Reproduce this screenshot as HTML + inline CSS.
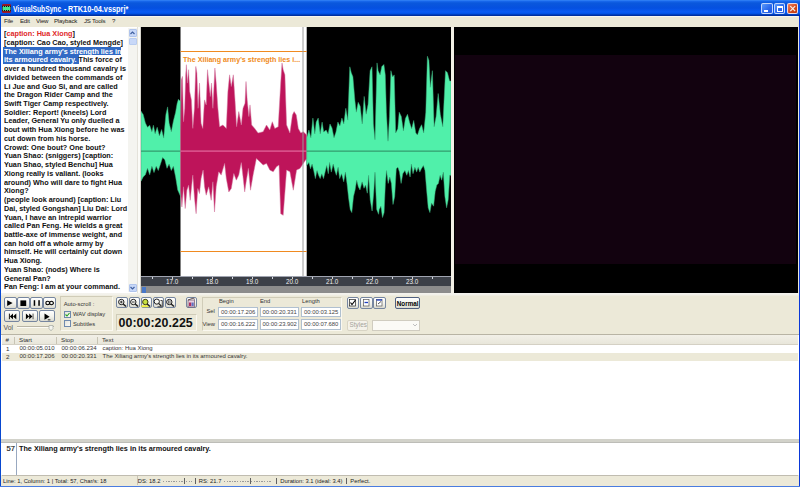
<!DOCTYPE html>
<html><head><meta charset="utf-8">
<style>
*{margin:0;padding:0;box-sizing:border-box}
html,body{width:800px;height:487px;overflow:hidden;background:#ECE9D8;font-family:"Liberation Sans",sans-serif;position:relative}
.a{position:absolute}
.t{position:absolute;white-space:nowrap}
#title{left:0;top:0;width:800px;height:16px;background:linear-gradient(#3C8CF8 0px,#1A6AEE 1px,#0A58DC 3px,#0550E0 8px,#0A5CF4 12px,#0050E0 14px,#0030A0 15px,#0030A0 16px)}
#menu{left:2px;top:16px;width:796px;height:11px;background:#ECE9D8;border-top:1px solid #F8F6EE}
.mi{position:absolute;top:17.2px;font-size:6.1px;color:#222;letter-spacing:-0.2px}
#txt{left:1.4px;top:27px;width:137.6px;height:266px;background:#fff;overflow:hidden}
.ln{position:absolute;left:1.5px;font-size:7.6px;font-weight:bold;color:#101010;white-space:nowrap;line-height:8.73px;height:8.73px;transform:scaleX(0.955);transform-origin:0 0}
#wave{left:141px;top:27px;width:310px;height:249px;background:#000;overflow:hidden}
#video{left:454px;top:27px;width:344px;height:266px;background:#000}
.btn{position:absolute;border:1px solid #7686A0;border-radius:2px;background:linear-gradient(#FFFFFF,#F2F2EC 55%,#DADAD0)}
.edit{position:absolute;background:#fff;border:1px solid #B0C0D0;font-size:5.9px;color:#444;line-height:8.5px;padding-left:2px}
.lbl{position:absolute;font-size:5.8px;color:#333;white-space:nowrap}
.st{position:absolute;top:477.6px;font-size:5.8px;color:#222;white-space:nowrap}
</style></head><body>

<!-- window borders -->
<div class="a" style="left:0;top:0;width:1.4px;height:487px;background:#0848D0"></div>
<div class="a" style="left:798.6px;top:0;width:1.4px;height:487px;background:#0A38D8"></div>
<div class="a" style="left:0;top:485.8px;width:800px;height:1.2px;background:#4A7CE0"></div>

<!-- title bar -->
<div id="title" class="a"></div>
<svg class="a" style="left:2px;top:3.7px" width="9" height="9" viewBox="0 0 9 9">
<rect x="0" y="0" width="9" height="9" rx="1.2" fill="#A01828"/>
<rect x="0.3" y="1.8" width="8.4" height="5.4" fill="#101010"/>
<rect x="0.6" y="3" width="7.8" height="3" fill="#40E890"/>
<g fill="#60F0A0"><rect x="1" y="2.2" width="1" height="0.8"/><rect x="3" y="2.2" width="1" height="0.8"/><rect x="5" y="2.2" width="1" height="0.8"/><rect x="7" y="2.2" width="1" height="0.8"/>
<rect x="1" y="6" width="1" height="0.8"/><rect x="3" y="6" width="1" height="0.8"/><rect x="5" y="6" width="1" height="0.8"/><rect x="7" y="6" width="1" height="0.8"/></g>
</svg>
<div class="t" style="left:13.1px;top:4.9px;font-size:8.2px;font-weight:bold;color:#fff;transform:scaleX(0.816);transform-origin:0 0">VisualSubSync</div>
<div class="t" style="left:63.8px;top:4.9px;font-size:8.2px;font-weight:bold;color:#fff;transform:scaleX(0.85);transform-origin:0 0">-</div>
<div class="t" style="left:68.3px;top:4.9px;font-size:8.2px;font-weight:bold;color:#fff;transform:scaleX(0.895);transform-origin:0 0">RTK10-04.vssprj*</div>
<div class="a" style="left:761.4px;top:3px;width:11.2px;height:11.3px;border:1px solid rgba(230,240,255,0.8);border-radius:2px;background:linear-gradient(135deg,#5A9AFA,#2866EC 60%,#1E58E0)"></div>
<div class="a" style="left:764px;top:10px;width:4px;height:2px;background:#fff"></div>
<div class="a" style="left:774px;top:3px;width:11.2px;height:11.3px;border:1px solid rgba(230,240,255,0.8);border-radius:2px;background:linear-gradient(135deg,#5A9AFA,#2866EC 60%,#1E58E0)"></div>
<div class="a" style="left:777px;top:6px;width:6px;height:6px;border:1px solid #fff;border-top-width:2px"></div>
<div class="a" style="left:786.5px;top:3px;width:11.5px;height:11.3px;border:1px solid rgba(240,240,255,0.85);border-radius:2px;background:linear-gradient(135deg,#F08060,#D24818 60%,#C03810)"></div>
<svg class="a" style="left:786.5px;top:3px" width="11.5" height="11.3"><path d="M3.3 3.2L8.2 8.1M8.2 3.2L3.3 8.1" stroke="#F8F0E8" stroke-width="1.2"/></svg>

<!-- menu -->
<div id="menu" class="a"></div>
<div class="mi" style="left:4px">File</div>
<div class="mi" style="left:20px">Edit</div>
<div class="mi" style="left:36px">View</div>
<div class="mi" style="left:54px">Playback</div>
<div class="mi" style="left:84px">JS Tools</div>
<div class="mi" style="left:112px">?</div>

<!-- text panel -->
<div id="txt" class="a"></div>
<div id="lines" class="a" style="left:2px;top:30.2px;width:126px;height:263px;overflow:hidden">
<div class="a" style="left:1.1px;top:16.9px;width:118px;height:8.35px;background:#316AC5"></div>
<div class="a" style="left:1.1px;top:25.25px;width:75.5px;height:8.35px;background:#316AC5"></div>
<div class="ln" style="top:0"><span>[</span><span style="color:#E02828">caption: Hua Xiong</span><span>]</span></div>
<div class="ln" style="top:8.73px">[caption: Cao Cao, styled Mengde]</div>
<div class="ln" style="top:17.46px;color:#fff">The Xiliang army's strength lies in</div>
<div class="ln" style="top:26.19px"><span style="color:#fff">its armoured cavalry.</span> This force of</div>
<div class="ln" style="top:34.92px">over a hundred thousand cavalry is</div>
<div class="ln" style="top:43.65px">divided between the commands of</div>
<div class="ln" style="top:52.38px">Li Jue and Guo Si, and are called</div>
<div class="ln" style="top:61.11px">the Dragon Rider Camp and the</div>
<div class="ln" style="top:69.84px">Swift Tiger Camp respectively.</div>
<div class="ln" style="top:78.57px">Soldier: Report! (kneels) Lord</div>
<div class="ln" style="top:87.3px">Leader, General Yu only duelled a</div>
<div class="ln" style="top:96.03px">bout with Hua Xiong before he was</div>
<div class="ln" style="top:104.76px">cut down from his horse.</div>
<div class="ln" style="top:113.49px">Crowd: One bout? One bout?</div>
<div class="ln" style="top:122.22px">Yuan Shao: (sniggers) [caption:</div>
<div class="ln" style="top:130.95px">Yuan Shao, styled Benchu] Hua</div>
<div class="ln" style="top:139.68px">Xiong really is valiant. (looks</div>
<div class="ln" style="top:148.41px">around) Who will dare to fight Hua</div>
<div class="ln" style="top:157.14px">Xiong?</div>
<div class="ln" style="top:165.87px">(people look around) [caption: Liu</div>
<div class="ln" style="top:174.6px">Dai, styled Gongshan] Liu Dai: Lord</div>
<div class="ln" style="top:183.33px">Yuan, I have an intrepid warrior</div>
<div class="ln" style="top:192.06px">called Pan Feng. He wields a great</div>
<div class="ln" style="top:200.79px">battle-axe of immense weight, and</div>
<div class="ln" style="top:209.52px">can hold off a whole army by</div>
<div class="ln" style="top:218.25px">himself. He will certainly cut down</div>
<div class="ln" style="top:226.98px">Hua Xiong.</div>
<div class="ln" style="top:235.71px">Yuan Shao: (nods) Where is</div>
<div class="ln" style="top:244.44px">General Pan?</div>
<div class="ln" style="top:253.17px">Pan Feng: I am at your command.</div>
</div>
<!-- text scrollbar -->
<div class="a" style="left:128px;top:28px;width:9px;height:264px;background:#F4F4F0"></div>
<div class="a" style="left:128.5px;top:29px;width:8px;height:8px;background:#C8D8F8;border:1px solid #B0C4EC;border-radius:1px"></div>
<svg class="a" style="left:129px;top:30px" width="7" height="6"><path d="M1.5 4L3.5 2L5.5 4" stroke="#4060A0" stroke-width="1.2" fill="none"/></svg>
<div class="a" style="left:128.5px;top:38px;width:8px;height:7px;background:#C8D8F8;border:1px solid #B8CCF0;border-radius:1px"></div>
<div class="a" style="left:128.5px;top:284px;width:8px;height:8px;background:#C8D8F8;border:1px solid #B0C4EC;border-radius:1px"></div>
<svg class="a" style="left:129px;top:285px" width="7" height="6"><path d="M1.5 2L3.5 4L5.5 2" stroke="#4060A0" stroke-width="1.2" fill="none"/></svg>

<!-- separator -->
<div class="a" style="left:136.8px;top:27px;width:4.2px;height:266px;background:#FBFBF8;border-left:0.6px solid #E4E2DA;border-right:0.6px solid #D8D6CE"></div>

<!-- waveform -->
<div id="wave" class="a"></div>
<svg class="a" style="left:141px;top:27px" width="310" height="249" viewBox="141 27 310 249">
<rect x="180.5" y="27" width="126.2" height="249" fill="#fff"/>
<path fill="#50F0AA" stroke="#3CA878" stroke-width="0.5" d="M141 151 L141.0 111.2 143.2 114.4 145.4 123.0 147.5 127.3 149.7 125.2 151.9 131.7 153.4 125.2 155.1 133.8 157.2 127.3 159.4 136.0 161.6 129.5 163.7 138.1 165.9 114.4 167.6 106.9 169.1 123.0 171.3 131.7 173.4 120.9 175.6 112.2 177.1 103.6 178.4 99.3 180.5 101.5 180.5 151 Z"/>
<path fill="#50F0AA" stroke="#3CA878" stroke-width="0.5" d="M141 151 L141.0 181.2 143.2 176.9 145.4 174.8 147.5 168.3 149.7 174.8 151.9 166.2 154.0 172.6 156.2 166.2 158.3 170.5 160.5 164.0 162.6 157.5 164.8 159.7 167.0 168.3 169.1 164.0 171.3 170.5 173.4 166.2 175.6 176.9 177.7 189.9 180.5 196.3 180.5 151 Z"/>
<path fill="#BE145A" stroke="#D27AA0" stroke-width="0.5" d="M180.5 151 L180.5 133.0 181.4 79.8 182.4 76.4 183.5 121.7 184.7 108.3 185.7 74.8 186.4 64.7 187.4 83.1 188.6 69.7 189.7 91.5 191.4 99.9 192.8 128.4 194.4 108.3 195.8 66.4 196.9 73.1 198.1 108.3 199.5 83.1 201.1 123.3 202.8 128.4 204.5 99.9 206.2 104.9 207.5 69.7 208.7 81.5 210.3 96.5 211.5 83.1 212.9 108.3 214.9 68.0 216.2 83.1 217.9 108.3 219.6 126.7 222.9 125.0 226.3 128.4 227.9 91.5 229.6 74.8 231.3 86.5 233.3 74.8 235.0 99.9 236.6 126.7 238.8 111.6 241.3 125.0 243.0 108.3 245.0 103.2 246.0 81.5 247.2 99.9 248.9 116.6 250.0 104.9 251.7 125.0 254.7 128.4 258.1 133.0 263.1 131.7 266.5 125.0 269.8 130.0 272.3 121.7 274.8 128.4 278.2 126.7 280.7 83.1 282.0 63.0 283.2 69.7 284.9 74.8 286.6 125.0 289.9 133.0 292.4 115.0 294.1 111.6 296.3 115.0 298.3 128.4 300.8 133.0 303.3 131.7 306.7 135.0 306.7 151 Z"/>
<path fill="#BE145A" stroke="#D27AA0" stroke-width="0.5" d="M180.5 151 L180.5 190.2 181.9 207.0 183.5 186.8 185.2 208.6 186.9 190.2 188.6 185.2 190.2 200.3 192.8 175.1 194.4 196.9 196.1 213.7 197.8 188.5 199.5 193.6 201.1 178.5 203.1 170.1 204.5 186.8 206.2 195.2 208.7 186.8 211.2 200.3 212.9 181.8 214.5 212.0 216.2 186.8 218.7 171.8 221.2 175.1 224.6 163.4 226.3 178.5 228.8 191.9 231.3 188.5 233.8 173.5 236.3 180.2 238.8 175.1 241.3 162.6 243.0 176.8 244.7 191.9 246.4 180.2 248.4 168.4 250.5 190.2 253.1 175.1 256.4 158.4 259.8 161.7 263.1 165.1 266.5 163.4 269.8 170.1 273.2 171.8 276.5 166.8 279.0 165.1 280.7 213.7 283.2 215.3 286.6 170.1 289.9 171.8 293.3 190.2 296.6 170.1 300.0 168.4 303.3 163.4 306.7 158.4 306.7 151 Z"/>
<path fill="#50F0AA" stroke="#3CA878" stroke-width="0.5" d="M306.7 151 L306.7 137.8 308.9 130.0 310.9 137.8 312.9 118.1 314.8 133.9 316.2 122.1 318.2 118.1 320.2 133.9 322.1 122.1 323.7 131.9 326.1 130.0 328.1 133.9 330.0 124.0 332.0 128.0 334.0 137.8 336.0 131.9 337.9 122.1 339.9 126.0 341.9 118.1 343.8 124.0 345.8 108.3 347.8 120.1 349.8 66.8 351.3 72.8 352.9 76.7 354.9 100.4 356.3 112.2 358.2 102.3 360.2 106.3 362.2 124.0 364.2 96.4 366.1 114.2 368.1 104.3 370.1 70.8 372.0 66.8 373.4 124.0 375.0 139.8 377.0 62.9 378.1 70.7 380.1 74.9 381.8 66.6 383.9 64.5 385.3 74.9 386.4 112.2 388.0 141.2 389.5 116.4 390.9 70.7 392.6 77.0 394.2 74.9 395.7 133.0 397.8 128.8 399.2 112.2 401.3 116.4 403.4 130.9 405.4 118.4 407.5 114.3 409.6 122.6 411.7 128.8 413.7 120.5 415.8 133.0 417.5 135.0 419.5 128.8 421.6 124.7 423.7 133.0 425.8 112.2 427.4 56.2 428.9 60.4 430.3 87.3 432.4 70.7 434.1 126.7 436.1 116.4 438.2 93.5 440.3 114.3 442.8 126.7 445.5 70.7 447.5 72.8 449.6 81.1 451.0 81.1 451 151 Z"/>
<path fill="#50F0AA" stroke="#3CA878" stroke-width="0.5" d="M306.7 151 L306.7 165.6 308.9 162.4 310.5 168.8 312.1 164.0 313.7 170.5 315.4 178.6 317.0 170.5 318.6 175.3 320.2 178.6 321.8 173.7 323.5 178.6 325.1 172.1 326.7 165.6 328.3 173.7 329.6 162.4 331.3 172.1 333.2 164.0 334.8 170.5 336.4 175.3 338.1 167.2 339.7 178.6 341.6 173.7 343.7 181.8 345.4 172.1 347.0 183.4 348.6 198.0 350.2 209.4 351.8 212.6 353.5 196.4 355.1 189.9 356.7 180.2 358.3 186.7 360.0 189.9 362.1 181.8 364.0 188.3 365.6 185.1 367.3 193.2 368.6 175.3 370.2 199.7 372.1 211.0 373.7 193.2 375.0 172.1 376.7 209.4 378.6 214.3 379.2 209.4 380.9 206.2 382.5 217.5 384.1 212.6 385.4 183.4 386.5 170.5 388.2 183.4 389.8 177.0 391.4 183.4 393.0 204.5 394.7 196.4 396.3 168.8 397.9 167.2 399.5 172.1 401.1 183.4 402.8 173.7 404.9 170.5 406.8 175.3 408.4 170.5 410.1 177.0 411.4 164.0 413.0 173.7 414.9 167.2 416.6 172.1 418.2 167.2 419.8 172.1 421.4 168.8 423.4 165.6 425.0 170.5 426.6 189.9 428.2 207.8 429.9 212.6 431.5 202.9 433.6 206.2 435.2 191.6 436.8 185.1 438.4 183.4 440.1 175.3 441.7 180.2 443.3 172.1 444.9 196.4 446.6 207.8 448.2 199.7 449.8 175.3 451.0 175.3 451 151 Z"/>
<line x1="141" y1="151.3" x2="180.5" y2="151.3" stroke="#309868" stroke-width="0.8"/>
<line x1="180.5" y1="151.3" x2="306.7" y2="151.3" stroke="#E8609A" stroke-width="0.8"/>
<line x1="306.7" y1="151.3" x2="451" y2="151.3" stroke="#309868" stroke-width="0.8"/>
<line x1="180.5" y1="51.5" x2="306.7" y2="51.5" stroke="#F08A20" stroke-width="1"/>
<line x1="180.5" y1="251.5" x2="306.7" y2="251.5" stroke="#F08A20" stroke-width="1"/>
<line x1="303" y1="27" x2="303" y2="276" stroke="#9A9A9A" stroke-width="1"/>
</svg>
<div class="t" style="left:183px;top:55.5px;font-size:7.15px;font-weight:bold;color:#F08A20">The Xiliang army's strength lies i...</div>
<!-- ruler -->
<div class="a" style="left:141px;top:275.6px;width:310px;height:10px;background:#3C4048;border-top:1px solid #A0A4B0"></div>
<div class="a" style="left:152px;top:276.5px;width:1px;height:2px;background:#D0D4DC"></div><div class="a" style="left:172px;top:276.5px;width:1px;height:2px;background:#D0D4DC"></div><div class="a" style="left:192px;top:276.5px;width:1px;height:2px;background:#D0D4DC"></div><div class="a" style="left:212px;top:276.5px;width:1px;height:2px;background:#D0D4DC"></div><div class="a" style="left:232px;top:276.5px;width:1px;height:2px;background:#D0D4DC"></div><div class="a" style="left:252px;top:276.5px;width:1px;height:2px;background:#D0D4DC"></div><div class="a" style="left:272px;top:276.5px;width:1px;height:2px;background:#D0D4DC"></div><div class="a" style="left:292px;top:276.5px;width:1px;height:2px;background:#D0D4DC"></div><div class="a" style="left:312px;top:276.5px;width:1px;height:2px;background:#D0D4DC"></div><div class="a" style="left:332px;top:276.5px;width:1px;height:2px;background:#D0D4DC"></div><div class="a" style="left:352px;top:276.5px;width:1px;height:2px;background:#D0D4DC"></div><div class="a" style="left:372px;top:276.5px;width:1px;height:2px;background:#D0D4DC"></div><div class="a" style="left:392px;top:276.5px;width:1px;height:2px;background:#D0D4DC"></div><div class="a" style="left:412px;top:276.5px;width:1px;height:2px;background:#D0D4DC"></div><div class="a" style="left:432px;top:276.5px;width:1px;height:2px;background:#D0D4DC"></div>
<div class="t" style="left:166px;top:278.2px;font-size:6.3px;color:#F0F0F0;width:12px;text-align:center">17.0</div><div class="t" style="left:206px;top:278.2px;font-size:6.3px;color:#F0F0F0;width:12px;text-align:center">18.0</div><div class="t" style="left:246px;top:278.2px;font-size:6.3px;color:#F0F0F0;width:12px;text-align:center">19.0</div><div class="t" style="left:286px;top:278.2px;font-size:6.3px;color:#F0F0F0;width:12px;text-align:center">20.0</div><div class="t" style="left:326px;top:278.2px;font-size:6.3px;color:#F0F0F0;width:12px;text-align:center">21.0</div><div class="t" style="left:366px;top:278.2px;font-size:6.3px;color:#F0F0F0;width:12px;text-align:center">22.0</div><div class="t" style="left:406px;top:278.2px;font-size:6.3px;color:#F0F0F0;width:12px;text-align:center">23.0</div>
<div class="a" style="left:141px;top:285.6px;width:310px;height:7px;background:#8C8C8C"></div>
<div class="a" style="left:142px;top:287px;width:3.6px;height:5.5px;background:#4878C8"></div>

<!-- splitter -->
<div class="a" style="left:451px;top:27px;width:3px;height:266px;background:#F2F0E6"></div>

<!-- video -->
<div id="video" class="a"></div>
<div class="a" style="left:455px;top:54.5px;width:341px;height:209.8px;background:#12020F"></div>


<!-- control panel -->
<div class="a" style="left:1.4px;top:293px;width:797.2px;height:41px;background:linear-gradient(#F4F3EE 0,#F2F1EA 2px,#ECE9D8 3px)"></div>
<!-- transport buttons -->
<div class="btn" style="left:4px;top:297px;width:12.5px;height:11.5px"></div>
<div class="btn" style="left:17px;top:297px;width:12.5px;height:11.5px"></div>
<div class="btn" style="left:30px;top:297px;width:12.5px;height:11.5px"></div>
<div class="btn" style="left:43px;top:297px;width:12.5px;height:11.5px"></div>
<div class="btn" style="left:4px;top:310px;width:16px;height:12px"></div>
<div class="btn" style="left:21.5px;top:310px;width:16.5px;height:12px"></div>
<div class="btn" style="left:38.8px;top:310px;width:16.7px;height:12px"></div>
<svg class="a" style="left:0;top:290px" width="60" height="45">
<path d="M7.2 10.2L7.2 16L12.6 13.1Z" fill="#000"/>
<rect x="20.4" y="10.4" width="5.8" height="5.6" fill="#000"/>
<rect x="33.7" y="10.2" width="1.5" height="5.6" fill="#000"/><rect x="38.3" y="10.2" width="1.5" height="5.6" fill="#000"/>
<path d="M45.8 13a1.9 1.7 0 1 0 3.8 0a1.9 1.7 0 1 0 3.8 0a1.9 1.7 0 1 0 -3.8 0a1.9 1.7 0 1 0 -3.8 0Z" fill="none" stroke="#000" stroke-width="1.1"/>
<rect x="8.9" y="23.6" width="0.9" height="5.6" fill="#000"/>
<path d="M13 23.6L13 29.2L9.8 26.4Z M16.3 23.6L16.3 29.2L13 26.4Z" fill="#000"/>
<path d="M25.9 23.6L25.9 29.2L29.2 26.4Z M29.2 23.6L29.2 29.2L32.5 26.4Z" fill="#000"/>
<rect x="32.6" y="23.6" width="0.9" height="5.6" fill="#444"/>
<path d="M44.5 23.6L44.5 29.8L49.6 26.7Z" fill="#000"/><rect x="47.8" y="29.2" width="2.6" height="1.2" fill="#444"/>
</svg>
<div class="lbl" style="left:3.5px;top:324px;font-size:6.8px;color:#555">Vol</div>
<div class="a" style="left:16.6px;top:326px;width:37px;height:2.2px;border-top:1px solid #B8B4A4;background:#FBFAF4"></div>
<svg class="a" style="left:48px;top:324.5px" width="6" height="7"><path d="M1 0.5H5V3.5L3 5.8L1 3.5Z" fill="#F4F4EE" stroke="#A0A8A0" stroke-width="0.7"/></svg>

<!-- autoscroll panel -->
<div class="a" style="left:59.5px;top:296.2px;width:53px;height:34.5px;border-top:1px solid #D0CCB8;border-left:1px solid #D0CCB8;border-right:1px solid #FAF8F0;border-bottom:1px solid #FAF8F0"></div>
<div class="lbl" style="left:63.7px;top:300.8px;font-size:5.8px">Auto-scroll :</div>
<div class="a" style="left:64px;top:311px;width:7px;height:7px;border:1px solid #6F8AAE;background:linear-gradient(135deg,#E4E4DC,#FAFAF6)"></div>
<svg class="a" style="left:64px;top:311px" width="7" height="7"><path d="M1.5 3.5L3 5L5.5 2" stroke="#21A121" stroke-width="1.1" fill="none"/></svg>
<div class="lbl" style="left:73px;top:311.4px;font-size:5.8px">WAV display</div>
<div class="a" style="left:64px;top:320.3px;width:7px;height:7px;border:1px solid #6F8AAE;background:linear-gradient(135deg,#E4E4DC,#FAFAF6)"></div>
<div class="lbl" style="left:73px;top:320.8px;font-size:5.8px">Subtitles</div>

<!-- zoom buttons -->
<div class="btn" style="left:116.3px;top:296.8px;width:11.5px;height:11.5px"></div>
<div class="btn" style="left:128.8px;top:296.8px;width:11.5px;height:11.5px"></div>
<div class="btn" style="left:140.8px;top:296.8px;width:11.5px;height:11.5px"></div>
<div class="btn" style="left:152.8px;top:296.8px;width:11.5px;height:11.5px"></div>
<div class="btn" style="left:164.8px;top:296.8px;width:11.5px;height:11.5px"></div>
<div class="btn" style="left:185.5px;top:296.8px;width:11.5px;height:11.5px"></div>
<svg class="a" style="left:110px;top:290px" width="90" height="22">
<g fill="none" stroke="#202020" stroke-width="1">
<circle cx="11.3" cy="12" r="2.7"/><path d="M13.2 13.9L16 16.6" stroke-width="1.4"/><path d="M10 12H12.6M11.3 10.7V13.3" stroke-width="0.9"/>
<circle cx="23.3" cy="12" r="2.7"/><path d="M25.2 13.9L28 16.6" stroke-width="1.4"/><path d="M22 12H24.6" stroke-width="0.9"/>
<rect x="31.5" y="15.2" width="7" height="2" fill="#F0F040" stroke="none"/>
<circle cx="35.3" cy="12" r="2.7" fill="#C8E040" stroke="#404010"/><path d="M37.2 13.9L40 16.6" stroke-width="1.4"/>
<circle cx="46.8" cy="11.6" r="2.6"/><path d="M48.6 13.4L51.2 16" stroke-width="1.2"/><path d="M50.5 10.5H52.3V16.8H47.5" stroke-width="0.8"/>
<circle cx="59.3" cy="12" r="2.7"/><path d="M61.2 13.9L64 16.6" stroke-width="1.4"/><path d="M58.6 10.3V13.7M60 10.3V13.7" stroke-width="0.7"/>
</g>
<rect x="78" y="10" width="6.5" height="7" fill="#E8D0E0" stroke="#705868" stroke-width="0.7"/>
<path d="M78 10L83.5 8L84.5 9.5" fill="none" stroke="#504040" stroke-width="0.9"/>
<rect x="79" y="12.5" width="2.2" height="3.5" fill="#B03060"/><rect x="81.5" y="12.5" width="2.2" height="3.5" fill="#6070C0"/>
</svg>
<!-- time display -->
<div class="a" style="left:115.6px;top:314px;width:81.5px;height:17px;border-top:1px solid #D0CCB8;border-left:1px solid #D0CCB8;border-right:1px solid #FAF8F0;border-bottom:1px solid #FAF8F0"></div>
<div class="t" style="left:118.5px;top:315.5px;font-size:12.4px;font-weight:bold;color:#111;letter-spacing:0.05px">00:00:20.225</div>

<!-- sel/view panel -->
<div class="a" style="left:201.5px;top:296.6px;width:140.5px;height:34.4px;border-top:1px solid #D0CCB8;border-left:1px solid #D0CCB8;border-right:1px solid #FAF8F0;border-bottom:1px solid #FAF8F0"></div>
<div class="lbl" style="left:219px;top:298px">Begin</div>
<div class="lbl" style="left:260px;top:298px">End</div>
<div class="lbl" style="left:302px;top:298px">Length</div>
<div class="lbl" style="left:206.5px;top:308px">Sel</div>
<div class="lbl" style="left:202.5px;top:320.5px">View</div>
<div class="edit" style="left:218px;top:306.5px;width:39.5px;height:10px">00:00:17.206</div>
<div class="edit" style="left:259.5px;top:306.5px;width:39.5px;height:10px">00:00:20.331</div>
<div class="edit" style="left:301px;top:306.5px;width:40px;height:10px">00:00:03.125</div>
<div class="edit" style="left:218px;top:318.8px;width:39.5px;height:10.8px">00:00:16.222</div>
<div class="edit" style="left:259.5px;top:318.8px;width:39.5px;height:10.8px">00:00:23.902</div>
<div class="edit" style="left:301px;top:318.8px;width:40px;height:10.8px">00:00:07.680</div>

<!-- style buttons -->
<div class="btn" style="left:346.5px;top:297px;width:12.5px;height:11.6px"></div>
<div class="btn" style="left:360px;top:297px;width:12.5px;height:11.6px"></div>
<div class="btn" style="left:373px;top:297px;width:12.5px;height:11.6px"></div>
<svg class="a" style="left:340px;top:290px" width="50" height="22">
<rect x="9.5" y="9.5" width="6" height="6.5" fill="#fff" stroke="#222" stroke-width="0.7"/><path d="M10.5 12.5L12 14.5L15.5 10" stroke="#000" stroke-width="1.1" fill="none"/>
<rect x="23.5" y="9.5" width="5.5" height="6.5" fill="#fff" stroke="#555" stroke-width="0.7"/><path d="M24.5 12.5H28" stroke="#2040C0" stroke-width="1.3"/>
<rect x="36.5" y="9.5" width="5.5" height="6.5" fill="#fff" stroke="#555" stroke-width="0.7"/><path d="M36.5 10H42" stroke="#2040C0" stroke-width="1.3"/><path d="M38 14L41 11.5" stroke="#222" stroke-width="0.8"/>
</svg>
<div class="btn" style="left:394.5px;top:297px;width:25.5px;height:12px;border-color:#506080"></div>
<div class="t" style="left:396.8px;top:299.8px;font-size:6.3px;font-weight:bold;color:#000">Normal</div>
<div class="a" style="left:347px;top:320px;width:21px;height:10.5px;border:1px solid #D8D4C4;border-radius:2px;background:#F4F2EA"></div>
<div class="t" style="left:349.5px;top:321.3px;font-size:6.4px;color:#A4A29A">Styles</div>
<div class="a" style="left:372px;top:319.5px;width:48px;height:11px;border:1px solid #D0CCC0;background:#FBFAF6"></div>
<svg class="a" style="left:411px;top:321px" width="8" height="8"><path d="M2 3L4 5L6 3" stroke="#C0C0C0" stroke-width="1" fill="none"/></svg>

<!-- list -->
<div class="a" style="left:1.4px;top:334px;width:797.2px;height:105px;background:#fff;border-top:1px solid #B8B4A4"></div>
<div class="a" style="left:2px;top:335px;width:796px;height:10px;background:linear-gradient(#F2F0E8,#E8E6DA);border-bottom:1px solid #D4D0C4"></div>
<div class="a" style="left:14px;top:336.5px;width:1px;height:7px;background:#C8C4B4"></div>
<div class="a" style="left:56px;top:336.5px;width:1px;height:7px;background:#C8C4B4"></div>
<div class="a" style="left:97px;top:336.5px;width:1px;height:7px;background:#C8C4B4"></div>
<div class="lbl" style="left:5.5px;top:336.3px;font-size:6.2px">#</div>
<div class="lbl" style="left:19px;top:336.3px;font-size:6.2px">Start</div>
<div class="lbl" style="left:61px;top:336.3px;font-size:6.2px">Stop</div>
<div class="lbl" style="left:102px;top:336.3px;font-size:6.2px">Text</div>
<div class="a" style="left:2px;top:353px;width:796px;height:8px;background:#ECE9D8"></div>
<div class="lbl" style="left:6px;top:344.8px;font-size:6.2px">1</div>
<div class="lbl" style="left:19.5px;top:344.8px;font-size:6px">00:00:05.010</div>
<div class="lbl" style="left:61.5px;top:344.8px;font-size:6px">00:00:06.234</div>
<div class="lbl" style="left:102.5px;top:344.8px;font-size:5.95px">caption: Hua Xiong</div>
<div class="lbl" style="left:6px;top:352.8px;font-size:6.2px">2</div>
<div class="lbl" style="left:19.5px;top:352.8px;font-size:6px">00:00:17.206</div>
<div class="lbl" style="left:61.5px;top:352.8px;font-size:6px">00:00:20.331</div>
<div class="lbl" style="left:102.5px;top:352.8px;font-size:5.95px">The Xiliang army's strength lies in its armoured cavalry.</div>

<!-- splitter -->
<div class="a" style="left:1.4px;top:439px;width:797.2px;height:4px;background:#D2D2CA;border-bottom:1px solid #BDBDB8"></div>
<!-- edit area -->
<div class="a" style="left:1.4px;top:443px;width:797.2px;height:32px;background:#fff"></div>
<div class="a" style="left:16.2px;top:443px;width:0.9px;height:32px;background:#98A8C0"></div>
<div class="t" style="left:6.5px;top:443.9px;font-size:7.6px;color:#222;-webkit-text-stroke:0.2px #222">57</div>
<div class="t" style="left:19px;top:444px;font-size:7.25px;font-weight:bold;color:#111">The Xiliang army's strength lies in its armoured cavalry.</div>

<!-- status bar -->
<div class="a" style="left:2px;top:475px;width:796px;height:10px;background:#ECE9D8;border-top:1px solid #C0BCB0"></div>
<div class="a" style="left:137px;top:476px;width:1px;height:9px;background:#C8C4B4"></div>
<div class="st" style="left:3px">Line: 1, Column: 1 | Total: 57, Char/s: 18</div>
<div class="st" style="left:137.8px">DS: 18.2</div><div class="a" style="left:162.9px;top:481px;width:21.099999999999994px;height:1px;background:repeating-linear-gradient(90deg,#9A9A9A 0 1.4px,transparent 1.4px 2.6px)"></div><div class="a" style="left:184.4px;top:477.8px;width:0.7px;height:6px;background:#606060"></div><div class="a" style="left:185.6px;top:481px;width:6.200000000000017px;height:1px;background:repeating-linear-gradient(90deg,#9A9A9A 0 1.4px,transparent 1.4px 2.6px)"></div><div class="a" style="left:195px;top:477.8px;width:0.7px;height:6px;background:#606060"></div><div class="st" style="left:198.8px">RS: 21.7</div><div class="a" style="left:224px;top:481px;width:25.5px;height:1px;background:repeating-linear-gradient(90deg,#9A9A9A 0 1.4px,transparent 1.4px 2.6px)"></div><div class="a" style="left:250.2px;top:477.8px;width:0.7px;height:6px;background:#606060"></div><div class="a" style="left:251.4px;top:481px;width:20.099999999999994px;height:1px;background:repeating-linear-gradient(90deg,#9A9A9A 0 1.4px,transparent 1.4px 2.6px)"></div><div class="a" style="left:275.6px;top:477.8px;width:0.7px;height:6px;background:#606060"></div><div class="st" style="left:280.3px">Duration: 3.1 (ideal: 3.4)</div><div class="a" style="left:345.7px;top:477.8px;width:0.7px;height:6px;background:#606060"></div><div class="st" style="left:350.3px">Perfect.</div>

</body></html>
